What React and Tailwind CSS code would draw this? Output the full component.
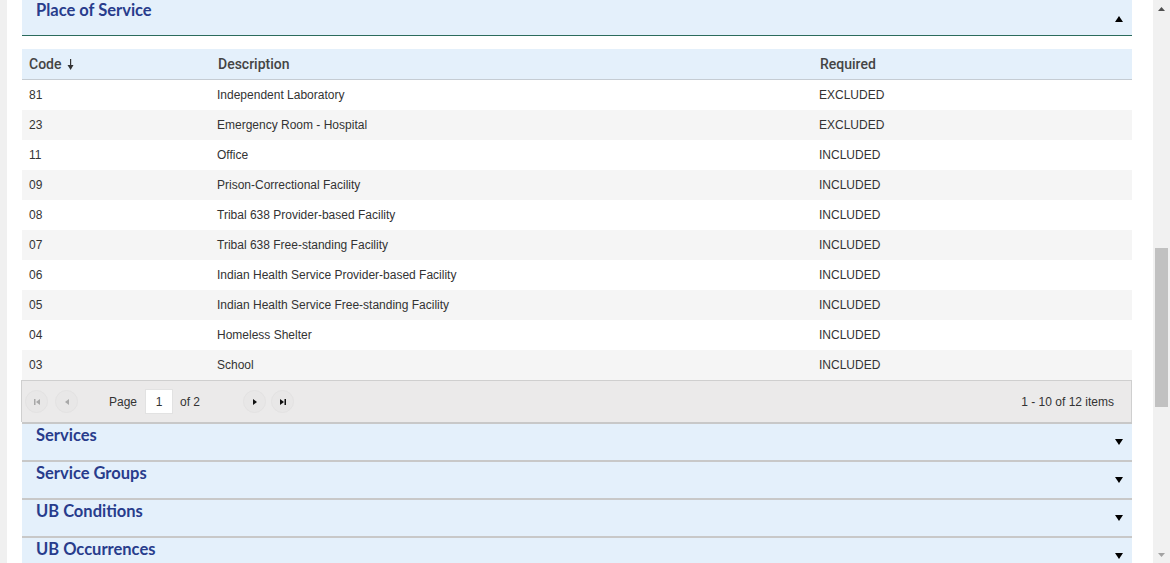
import React from "react";

const rows = [
  { code: "81", desc: "Independent Laboratory", req: "EXCLUDED" },
  { code: "23", desc: "Emergency Room - Hospital", req: "EXCLUDED" },
  { code: "11", desc: "Office", req: "INCLUDED" },
  { code: "09", desc: "Prison-Correctional Facility", req: "INCLUDED" },
  { code: "08", desc: "Tribal 638 Provider-based Facility", req: "INCLUDED" },
  { code: "07", desc: "Tribal 638 Free-standing Facility", req: "INCLUDED" },
  { code: "06", desc: "Indian Health Service Provider-based Facility", req: "INCLUDED" },
  { code: "05", desc: "Indian Health Service Free-standing Facility", req: "INCLUDED" },
  { code: "04", desc: "Homeless Shelter", req: "INCLUDED" },
  { code: "03", desc: "School", req: "INCLUDED" },
];

const sections = ["Services", "Service Groups", "UB Conditions", "UB Occurrences"];

const titleFont = { fontFamily: "Lato, 'Open Sans', sans-serif" };

const Caret = ({ up }) => (
  <svg width="8" height="6" viewBox="0 0 8 6" className="shrink-0">
    {up ? <path d="M0 6 L4 0 L8 6 Z" fill="#000" /> : <path d="M0 0 L8 0 L4 6 Z" fill="#000" />}
  </svg>
);

const PagerIcon = ({ kind, disabled }) => {
  const c = disabled ? "#a8a8a8" : "#111";
  return (
    <svg width="8" height="8" viewBox="0 0 8 8">
      {kind === "first" && (
        <>
          <rect x="1" y="1" width="1.5" height="6" fill={c} />
          <path d="M7 1 L7 7 L3 4 Z" fill={c} />
        </>
      )}
      {kind === "prev" && <path d="M6 1 L6 7 L2 4 Z" fill={c} />}
      {kind === "next" && <path d="M2 1 L2 7 L6 4 Z" fill={c} />}
      {kind === "last" && (
        <>
          <path d="M1 1 L1 7 L5 4 Z" fill={c} />
          <rect x="5.5" y="1" width="1.5" height="6" fill={c} />
        </>
      )}
    </svg>
  );
};

const PagerButton = ({ kind, disabled }) => (
  <div className="w-[23px] h-[23px] rounded-full flex items-center justify-center bg-[#e8e7e7] border border-[#e3e2e2]">
    <PagerIcon kind={kind} disabled={disabled} />
  </div>
);

export default function App() {
  return (
    <div className="w-[1170px] h-[563px] overflow-hidden flex bg-white">
      <div className="w-[7px] shrink-0 bg-[#f0f0f0]" />

      <div className="flex-1 pl-[15px] pr-[21px]">
        {/* open section */}
        <div className="-mt-[3px] border-t-2 border-[#c8c8c8] bg-[#e4f0fb] h-[39px] border-b border-b-[#2b6b5d] flex justify-between pl-[14px] pr-[9px]">
          <span className="text-[16.5px] leading-[22px] font-bold text-[#283c8c]" style={titleFont}>
            Place of Service
          </span>
          <div className="pt-[17px]">
            <Caret up />
          </div>
        </div>

        <div className="mt-[13px]" style={{ fontFamily: "'Liberation Sans', Arial, sans-serif" }}>
          <div
            className="grid grid-cols-[188px_602px_1fr] h-[31px] items-center bg-[#e4f0fb] border-b border-[#c5ccd3] text-[14px] font-medium text-[#444]"
            style={{ fontFamily: "Roboto, sans-serif" }}
          >
            <div className="pl-[7px] flex items-center gap-[6px]">
              Code
              <svg width="7" height="11" viewBox="0 0 7 11">
                <rect x="3" y="0" width="1.2" height="7" fill="#333" />
                <path d="M0.5 6 L6.5 6 L3.6 11 Z" fill="#333" />
              </svg>
            </div>
            <div className="pl-[8px]">Description</div>
            <div className="pl-[8px]">Required</div>
          </div>

          {rows.map((r, i) => (
            <div
              key={r.code}
              className={`grid grid-cols-[188px_602px_1fr] h-[30px] items-center text-[12px] text-[#333] ${
                i % 2 === 1 ? "bg-[#f5f5f5]" : "bg-white"
              }`}
            >
              <div className="pl-[7px]">{r.code}</div>
              <div className="pl-[7px]">{r.desc}</div>
              <div className="pl-[7px]">{r.req}</div>
            </div>
          ))}

          <div className="-ml-[1px] h-[42px] border border-b-0 border-[#cfcfcf] bg-[#ebeaea] flex items-center text-[12px] text-[#333] pl-[3px] pr-[17px]">
            <div className="flex items-center gap-[7px]">
              <PagerButton kind="first" disabled />
              <PagerButton kind="prev" disabled />
            </div>
            <span className="ml-[31px]">Page</span>
            <div className="ml-[8px] w-[28px] h-[25px] bg-white border border-[#e2e2e2] flex items-center justify-center">
              1
            </div>
            <span className="ml-[7px]">of 2</span>
            <div className="ml-[43px] flex items-center gap-[5px]">
              <PagerButton kind="next" />
              <PagerButton kind="last" />
            </div>
            <span className="ml-auto">1 - 10 of 12 items</span>
          </div>
        </div>

        {sections.map((s) => (
          <div
            key={s}
            className="border-t-2 border-[#c8c8c8] bg-[#e4f0fb] h-[38px] flex justify-between pl-[14px] pr-[9px]"
          >
            <span className="text-[16.5px] leading-[22px] font-bold text-[#283c8c]" style={titleFont}>
              {s}
            </span>
            <div className="pt-[15px]">
              <Caret />
            </div>
          </div>
        ))}
      </div>

      {/* scrollbar */}
      <div className="w-[17px] shrink-0 bg-[#f1f1f1] flex flex-col items-center">
        <div className="h-[17px] flex items-center justify-center">
          <svg width="7" height="4" viewBox="0 0 7 4">
            <path d="M0 4 L3.5 0 L7 4 Z" fill="#505050" />
          </svg>
        </div>
        <div className="mt-[231px] w-[13px] h-[159px] bg-[#c1c1c1]" />
        <div className="mt-auto h-[17px] flex items-center justify-center">
          <svg width="7" height="4" viewBox="0 0 7 4">
            <path d="M0 0 L7 0 L3.5 4 Z" fill="#a3a3a3" />
          </svg>
        </div>
      </div>
    </div>
  );
}
